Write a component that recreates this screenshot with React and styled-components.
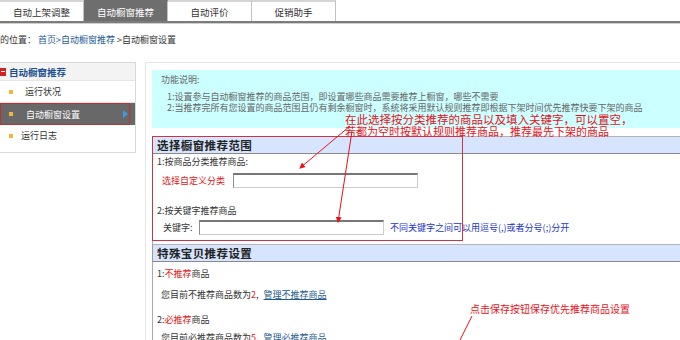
import styled, { createGlobalStyle } from 'styled-components';

const GlobalStyle = createGlobalStyle`
  html, body { margin: 0; padding: 0; background: #fff; }
  body {
    font-family: "Noto Sans CJK SC", "Noto Sans", sans-serif;
    font-size: 9px;
    color: #333;
    overflow: hidden;
  }
`;

const Page = styled.div`
  position: relative;
  width: 680px;
  height: 340px;
  overflow: hidden;
`;

const TabBar = styled.div`
  display: flex;
  height: 23px;
  box-sizing: border-box;
  border-bottom: 2px solid #7c7c7c;
  box-shadow: 0 1px 0 #d0d0d0;
`;

const Tab = styled.div`
  width: 84px;
  box-sizing: border-box;
  display: flex;
  align-items: center;
  justify-content: center;
  border-top: 2px solid ${p => (p.$active ? '#6e6e6e' : '#d4d4d4')};
  border-right: 1px solid #c2c2c2;
  background: ${p => (p.$active ? '#6e6e6e' : '#fff')};
  color: ${p => (p.$active ? '#fff' : '#333')};
  font-size: 9.5px;
`;

const Crumb = styled.div`
  margin-top: 11px;
  height: 12px;
  line-height: 12px;
  color: #333;
`;

const CrumbLink = styled.span`
  color: #1e5a99;
`;

const Main = styled.div`
  display: flex;
  align-items: flex-start;
  margin-top: 16px;
`;

const Sidebar = styled.div`
  width: 136px;
  height: 91px;
  box-sizing: border-box;
  border: 1px solid #d9d9d9;
  border-left: none;
  flex-shrink: 0;
`;

const SideHead = styled.div`
  height: 17px;
  display: flex;
  align-items: center;
  gap: 3px;
  background: #f3f3f3;
  border-bottom: 1px solid #e6e6e6;
  color: #1b4f8f;
  font-weight: bold;
  font-size: 9.5px;
`;

const MinusIcon = styled.span`
  width: 6px;
  height: 8px;
  background: #d42020;
  display: flex;
  align-items: center;
  &::after {
    content: '';
    display: block;
    width: 4px;
    height: 1px;
    background: #fff;
    margin-left: 1px;
  }
`;

const SideItem = styled.div`
  height: 21px;
  display: flex;
  align-items: center;
  padding-left: 9px;
`;

const ActiveRow = styled.div`
  height: 22px;
  background: #686868;
  border-top: 1px solid #e0e0e0;
`;

const ActiveBox = styled.div`
  width: 130px;
  height: 100%;
  box-sizing: border-box;
  border: 1px solid #b83434;
  display: flex;
  align-items: center;
  padding-left: 8px;
  color: #fff;
`;

const Bullet = styled.span`
  width: 4px;
  height: 4px;
  background: #f3b53a;
  margin-right: ${p => p.$gap}px;
`;

const BlueArrow = styled.span`
  margin-left: auto;
  margin-right: 1px;
  width: 0;
  height: 0;
  border-top: 4px solid transparent;
  border-bottom: 4px solid transparent;
  border-left: 5px solid #3b9be2;
`;

const Content = styled.div`
  flex: 1;
  min-width: 0;
  margin-left: 9px;
  border-top: 1px solid #e4e4e4;
  border-left: 1px solid #e4e4e4;
  padding: 7px 0 0 6px;
  height: 300px;
`;

const Info = styled.div`
  height: 58px;
  box-sizing: border-box;
  background: #ccffff;
  padding: 4px 0 0 9px;
  color: #666;
  line-height: 11px;
  white-space: nowrap;
`;

const InfoLine = styled.div`
  padding-left: 6px;
  margin-top: ${p => p.$top || 0}px;
`;

const Section = styled.div`
  margin-top: ${p => p.$top}px;
`;

const SectionHead = styled.div`
  height: 18px;
  box-sizing: border-box;
  display: flex;
  align-items: center;
  padding-left: 4px;
  background: #d6e4fd;
  border-top: 1px solid #b4b4b4;
  border-bottom: 1px solid #8a8a8a;
  border-left: 1px solid #999;
  font-size: 11.5px;
  font-weight: bold;
  letter-spacing: 0.4px;
  color: #222;
`;

const SectionBody = styled.div`
  height: ${p => p.$h}px;
  box-sizing: border-box;
  border-left: 1px solid #aaa;
  padding: ${p => p.$pt}px 0 0 4px;
  line-height: 11px;
  white-space: nowrap;
`;

const Line = styled.div`
  margin-top: ${p => p.$top || 0}px;
  padding-left: ${p => p.$indent || 0}px;
`;

const FieldRow = styled.div`
  display: flex;
  align-items: center;
  margin-top: ${p => p.$top}px;
  padding-left: ${p => p.$indent}px;
  height: 15px;
`;

const Label = styled.span`
  width: ${p => p.$w}px;
  color: ${p => (p.$red ? '#e02020' : '#333')};
`;

const TextInput = styled.input`
  width: 185px;
  height: 15px;
  box-sizing: border-box;
  border: 1px solid #cdcdcd;
  border-top: 2px solid #777;
  border-left: 1px solid #8c8c8c;
  padding: 0 2px;
  margin: 0;
  font: inherit;
  background: #fff;
`;

const Hint = styled.span`
  margin-left: 6px;
  color: #1a33cc;
`;

const Red = styled.span`
  color: #e01818;
`;

const Manage = styled.span`
  color: #1f5c8f;
  text-decoration: underline;
  margin-left: 5px;
`;

const Note = styled.div`
  position: absolute;
  left: ${p => p.$x}px;
  top: ${p => p.$y}px;
  font-size: ${p => p.$size}px;
  line-height: ${p => p.$size + 1}px;
  color: #e8101a;
  white-space: nowrap;
  pointer-events: none;
`;

const RedFrame = styled.div`
  position: absolute;
  left: 152px;
  top: 136px;
  width: 311px;
  height: 105px;
  box-sizing: border-box;
  border: 1px solid #cc3344;
  pointer-events: none;
`;

const Marks = styled.svg`
  position: absolute;
  left: 0;
  top: 0;
  pointer-events: none;
`;

const tabs = ['自动上架调整', '自动橱窗推荐', '自动评价', '促销助手'];

export default function App() {
  return (
    <>
      <GlobalStyle />
      <Page>
        <TabBar>
          {tabs.map((t, i) => (
            <Tab key={t} $active={i === 1}>{t}</Tab>
          ))}
        </TabBar>

        <Crumb>
          的位置： <CrumbLink>首页&gt;自动橱窗推荐</CrumbLink> &gt;自动橱窗设置
        </Crumb>

        <Main>
          <Sidebar>
            <SideHead>
              <MinusIcon />
              自动橱窗推荐
            </SideHead>
            <SideItem>
              <Bullet $gap={12} />
              运行状况
            </SideItem>
            <ActiveRow>
              <ActiveBox>
                <Bullet $gap={13} />
                自动橱窗设置
                <BlueArrow />
              </ActiveBox>
            </ActiveRow>
            <SideItem>
              <Bullet $gap={8} />
              运行日志
            </SideItem>
          </Sidebar>

          <Content>
            <Info>
              <div>功能说明:</div>
              <InfoLine $top={6}>1:设置参与自动橱窗推荐的商品范围，即设置哪些商品需要推荐上橱窗，哪些不需要</InfoLine>
              <InfoLine>2:当推荐完所有您设置的商品范围且仍有剩余橱窗时，系统将采用默认规则推荐即根据下架时间优先推荐快要下架的商品</InfoLine>
            </Info>

            <Section $top={8}>
              <SectionHead>选择橱窗推荐范围</SectionHead>
              <SectionBody $h={90} $pt={2}>
                <Line>1:按商品分类推荐商品:</Line>
                <FieldRow $top={6} $indent={5}>
                  <Label $w={71} $red>选择自定义分类</Label>
                  <TextInput type="text" />
                </FieldRow>
                <Line $top={17}>2:按关键字推荐商品</Line>
                <FieldRow $top={4} $indent={6}>
                  <Label $w={36}>关键字:</Label>
                  <TextInput type="text" />
                  <Hint>不同关键字之间可以用逗号(,)或者分号(;)分开</Hint>
                </FieldRow>
              </SectionBody>
            </Section>

            <Section $top={0}>
              <SectionHead>特殊宝贝推荐设置</SectionHead>
              <SectionBody $h={100} $pt={6}>
                <Line>1:<Red>不推荐</Red>商品</Line>
                <Line $top={10} $indent={4}>
                  您目前不推荐商品数为<Red>2</Red>,<Manage>管理不推荐商品</Manage>
                </Line>
                <Line $top={14}>2:<Red>必推荐</Red>商品</Line>
                <Line $top={7} $indent={4}>
                  您目前必推荐商品数为<Red>5</Red>,<Manage>管理必推荐商品</Manage>
                </Line>
              </SectionBody>
            </Section>
          </Content>
        </Main>

        <Note $x={345} $y={113} $size={11.5}>在此选择按分类推荐的商品以及填入关键字，可以置空，</Note>
        <Note $x={345} $y={125} $size={11}>若都为空时按默认规则推荐商品，推荐最先下架的商品</Note>
        <RedFrame />
        <Note $x={470} $y={303} $size={10}>点击保存按钮保存优先推荐商品设置</Note>

        <Marks width="680" height="340" viewBox="0 0 680 340">
          <defs>
            <marker id="head" markerWidth="6" markerHeight="6" refX="5" refY="3" orient="auto" markerUnits="userSpaceOnUse">
              <path d="M0,0 L6,3 L0,6 Z" fill="#e8101a" />
            </marker>
          </defs>
          <line x1="350" y1="126" x2="300" y2="168" stroke="#e8101a" strokeWidth="1" markerEnd="url(#head)" />
          <line x1="352" y1="131" x2="338" y2="222" stroke="#e8101a" strokeWidth="1" markerEnd="url(#head)" />
          <line x1="472" y1="316" x2="460" y2="340" stroke="#e8101a" strokeWidth="1" />
        </Marks>
      </Page>
    </>
  );
}
